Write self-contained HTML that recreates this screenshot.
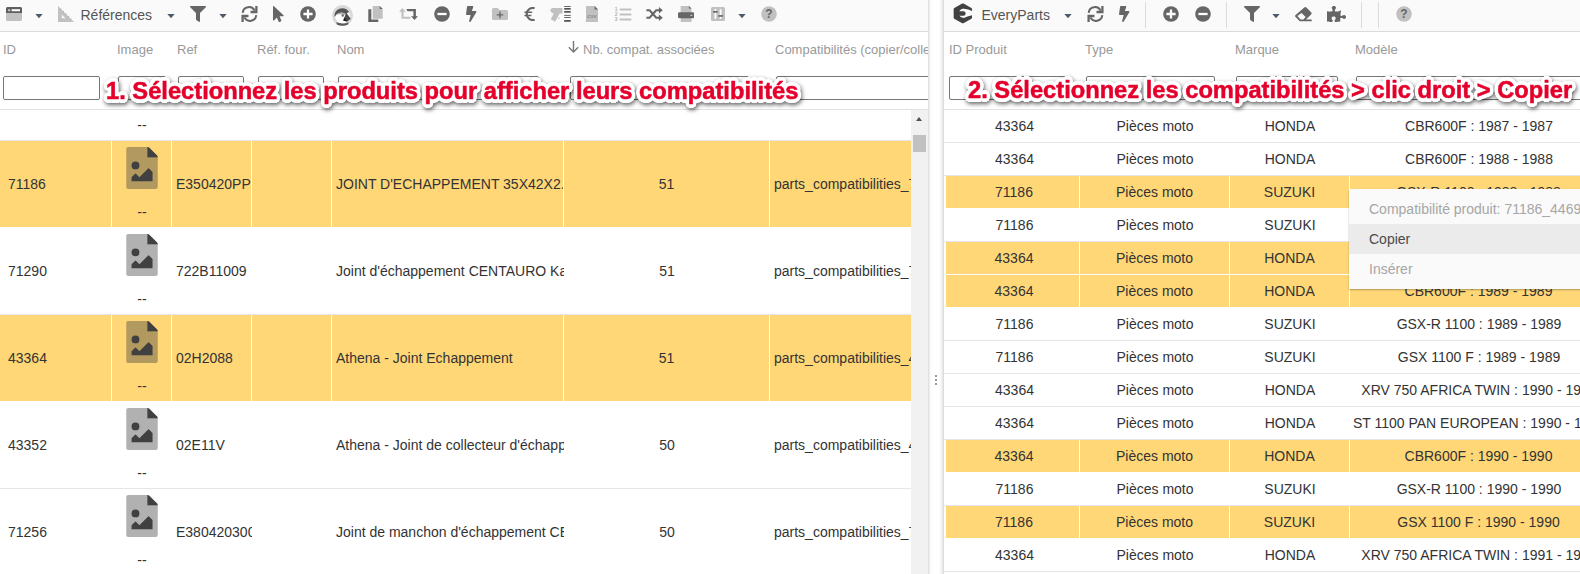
<!DOCTYPE html>
<html lang="fr"><head><meta charset="utf-8"><title>Compatibilités</title>
<style>
*{box-sizing:border-box;margin:0;padding:0}
html,body{width:1580px;height:574px;overflow:hidden;background:#fff;font-family:"Liberation Sans",Arial,sans-serif;font-size:14px;color:#333}
.abs{position:absolute}
#left{position:absolute;left:0;top:0;width:928px;height:574px;overflow:hidden;background:#fff}
#right{position:absolute;left:944px;top:0;width:636px;height:574px;overflow:hidden;background:#fff}
#split{position:absolute;left:928px;top:0;width:16px;height:574px;background:linear-gradient(90deg,#dcdcdc 0,#e6e6e6 1px,#f7f7f7 2px,#fff 4px,#fff 11px,#f6f6f6 13px,#e4e4e4 15px,#d6d6d6 16px)}
.tb{position:absolute;left:0;top:0;right:0;height:32px;background:#fafafa;border-bottom:1px solid #dcdcdc}
.tb svg{position:absolute}
.tbt{position:absolute;top:6px;font-size:14px;color:#555;line-height:18px;white-space:nowrap}
.sep{position:absolute;top:2px;width:1px;height:26px;background:#dcdcdc}
.hd{position:absolute;top:42px;font-size:13px;color:#999;line-height:16px;white-space:nowrap}
.fi{position:absolute;top:76px;height:24px;border:1px solid #767676;border-radius:2px;background:#fff}
.hline{position:absolute;left:0;right:0;top:109px;height:1px;background:#e2e2e2}
.lrow{position:absolute;left:0;width:911px;height:87px;border-bottom:1px solid #e6e6e8}
.lrow.sel{background:#ffd777;border-bottom-color:#fff}
.lrow .c{position:absolute;top:0;height:86px;line-height:86px;white-space:nowrap;overflow:hidden;padding-left:8px}
.lrow.sel .c{border-right:1px solid #fffdf6}
.lrow .c.ctr{text-align:center;padding-left:0}
.fimg{position:absolute;left:14px;top:6px}
.dd{position:absolute;left:0;width:60px;top:63px;line-height:16px;text-align:center;font-size:14px}
.rrow{position:absolute;left:0;width:700px;height:33px;border-bottom:1px solid #e6e6e8}
.rrow .c{position:absolute;top:0;height:32px;line-height:32px;text-align:center;white-space:nowrap;overflow:hidden}
.rrow.sel{border-bottom-color:#fff}
.rrow.sel .c{background:#ffd777;border-right:1px solid #fffdf6}
.menu{position:absolute;left:405px;top:189px;width:300px;height:100px;background:#fafafa;box-shadow:0 1px 1.5px rgba(0,0,0,.3);padding-top:5px}
.menu div{height:30px;line-height:30px;padding-left:20px;font-size:14px;white-space:nowrap;color:#4a4a4a}
.menu .dis{color:#a6a6a6}
.menu .hov{background:#ebebeb}
.note{position:absolute;font-weight:bold;font-size:23.7px;line-height:28px;color:#e4002b;white-space:nowrap;z-index:20;-webkit-text-stroke:.5px #e4002b;
 text-shadow:3.70px 0.00px 0.6px #fff,3.57px 0.96px 0.6px #fff,3.20px 1.85px 0.6px #fff,2.62px 2.62px 0.6px #fff,1.85px 3.20px 0.6px #fff,0.96px 3.57px 0.6px #fff,0.00px 3.70px 0.6px #fff,-0.96px 3.57px 0.6px #fff,-1.85px 3.20px 0.6px #fff,-2.62px 2.62px 0.6px #fff,-3.20px 1.85px 0.6px #fff,-3.57px 0.96px 0.6px #fff,-3.70px 0.00px 0.6px #fff,-3.57px -0.96px 0.6px #fff,-3.20px -1.85px 0.6px #fff,-2.62px -2.62px 0.6px #fff,-1.85px -3.20px 0.6px #fff,-0.96px -3.57px 0.6px #fff,-0.00px -3.70px 0.6px #fff,0.96px -3.57px 0.6px #fff,1.85px -3.20px 0.6px #fff,2.62px -2.62px 0.6px #fff,3.20px -1.85px 0.6px #fff,3.57px -0.96px 0.6px #fff,2.60px 0.00px 0.6px #fff,2.34px 1.13px 0.6px #fff,1.62px 2.03px 0.6px #fff,0.58px 2.53px 0.6px #fff,-0.58px 2.53px 0.6px #fff,-1.62px 2.03px 0.6px #fff,-2.34px 1.13px 0.6px #fff,-2.60px 0.00px 0.6px #fff,-2.34px -1.13px 0.6px #fff,-1.62px -2.03px 0.6px #fff,-0.58px -2.53px 0.6px #fff,0.58px -2.53px 0.6px #fff,1.62px -2.03px 0.6px #fff,2.34px -1.13px 0.6px #fff,1.40px 0.00px 0.6px #fff,0.99px 0.99px 0.6px #fff,0.00px 1.40px 0.6px #fff,-0.99px 0.99px 0.6px #fff,-1.40px 0.00px 0.6px #fff,-0.99px -0.99px 0.6px #fff,-0.00px -1.40px 0.6px #fff,0.99px -0.99px 0.6px #fff;filter:drop-shadow(1.5px 2.5px 2px rgba(0,0,0,.6))}
.sb{position:absolute;left:911px;top:110px;width:17px;height:464px;background:#f1f1f1}
.sb i{position:absolute;left:2px;top:25px;width:13px;height:17px;background:#c1c1c1}
.sb b{position:absolute;left:5px;top:7px;width:0;height:0;border-left:3.500px solid transparent;border-right:3.500px solid transparent;border-bottom:4.500px solid #505050}
</style></head><body>

<div id="left">
<div class="tb" id="ltb"><svg style="left:6px;top:7px" width="16" height="14" viewBox="0 0 16 14"><rect width="16" height="14" rx="1.600" fill="#c1c1c1"/><path d="M0 1.600A1.600 1.600 0 0 1 1.600 0h12.800A1.600 1.600 0 0 1 16 1.600V6H0z" fill="#5f5f5f"/><rect x="2" y="2.200" width="2.200" height="2" fill="#c1c1c1"/><rect x="5.600" y="2.200" width="8.400" height="2" fill="#fff"/></svg>
<svg style="left:35px;top:14px" width="8" height="5" viewBox="0 0 8 5"><path d="M.3 0h7.400L4 4.300z" fill="#4c5a69"/></svg>
<svg style="left:58px;top:6px" width="16" height="16" viewBox="0 0 16 16"><path fill-rule="evenodd" d="M0 0L16 16H0zM3.800 8.600v3.700h3.700z" fill="#c1c1c1"/><path d="M3.300 2.700l-1.100 1.100M5.800 5.200l-1.100 1.100M8.300 7.700l-1.100 1.100M10.800 10.200l-1.100 1.100M13.300 12.700l-1.100 1.100" stroke="#9c9c9c" stroke-width=".9"/></svg>
<span class="tbt" style="left:80.500px">Références</span>
<svg style="left:167px;top:14px" width="8" height="5" viewBox="0 0 8 5"><path d="M.3 0h7.400L4 4.300z" fill="#4c5a69"/></svg>
<svg style="left:189.500px;top:6px" width="16" height="16" viewBox="0 0 512 512"><path fill="#666" d="M487.976 0H24.028C2.710 0-8.047 25.866 7.058 40.971L192 225.941V432c0 7.831 3.821 15.170 10.237 19.662l80 55.980C298.020 518.690 320 507.493 320 487.980V225.941l184.947-184.970C520.021 25.896 509.338 0 487.976 0z"/></svg>
<svg style="left:219px;top:14px" width="8" height="5" viewBox="0 0 8 5"><path d="M.3 0h7.400L4 4.300z" fill="#4c5a69"/></svg>
<svg style="left:241px;top:6px" width="17" height="16" viewBox="0 0 17 16"><g fill="none" stroke="#666"><path stroke-width="2" d="M1.700 6.800A6.300 6.300 0 0 1 13.600 4.600"/><path stroke-width="2.300" d="M15.400 .1V6H9.500"/><path stroke-width="2" d="M15.300 9.200A6.300 6.300 0 0 1 3.400 11.400"/><path stroke-width="2.300" d="M1.600 15.900V10H7.500"/></g></svg>
<svg style="left:273px;top:6px" width="10.700" height="16" viewBox="0 0 320 512" preserveAspectRatio="none"><path fill="#666" d="M302.189 329.126H196.105l55.831 135.993c3.889 9.428-.555 19.999-9.444 23.999l-49.165 21.427c-9.165 4-19.443-.571-23.332-9.714l-53.053-129.136-86.664 89.138C18.729 472.710 0 463.554 0 447.977V18.299C0 1.899 19.921-6.096 30.277 5.443l284.412 292.542c11.472 11.179 3.007 31.141-12.500 31.141z"/></svg>
<svg style="left:299.500px;top:6px" width="16" height="16" viewBox="0 0 16 16"><circle cx="8" cy="8" r="7.800" fill="#666"/><path d="M3.400 8h9.200M8 3.400v9.200" stroke="#fff" stroke-width="2.300"/></svg>
<svg style="left:332px;top:4.500px" width="21" height="21" viewBox="0 0 21 21"><circle cx="10.500" cy="10.500" r="10.500" fill="#d9d9d9"/><circle cx="10.600" cy="11.300" r="7.500" fill="#fff"/><path d="M2.600 12C1.900 7 5.600 3.300 10.200 3.300c3.100 0 5.600 1.500 6.900 3.700L13.300 9C10 6.600 4.800 7.600 2.600 12z" fill="#555"/><path d="M3.600 10C6 7.300 10.600 6.600 13.300 9l-1.300 1.600C9.600 8.800 6 8.800 3.600 10z" fill="#adadad"/><path d="M14.200 7.500l4.500 6.300-3.300 2.600-4.100-.7z" fill="#4a4a4a"/><path d="M12.200 12.200l3.200 4.200-4.100-.7z" fill="#1f1f1f"/><circle cx="10.700" cy="10.700" r="1.100" fill="#555"/><path d="M4.400 17.300c3.500 1.500 8.500 1.500 12.100-.1l-.3 2.200c-3.500 1.700-8 1.700-11.400 0z" fill="#5a5a5a"/></svg>
<svg style="left:368px;top:6px" width="15" height="16" viewBox="0 0 15 16"><path d="M.3 3.200h3v10.300h7v2.500H.3z" fill="#666"/><path d="M4.700 0h7l3 3v9.800h-10z" fill="#c1c1c1"/><path d="M11.700 0l3 3h-3z" fill="#666"/></svg>
<svg style="left:399px;top:8px" width="19" height="12" viewBox="0 0 19 12"><path d="M0 3.800L3.400 0l3.400 3.800H4.600v4.900h6.900v2.100H2.400V3.800z" fill="#c1c1c1"/><path d="M7.200 1.100h9.700v7.100H19L15.500 12 12 8.200h2.400V3.200H8.600z" fill="#666"/></svg>
<svg style="left:434.200px;top:6px" width="16" height="16" viewBox="0 0 16 16"><circle cx="8" cy="8" r="7.800" fill="#666"/><path d="M3.400 8h9.200" stroke="#fff" stroke-width="2.300"/></svg>
<svg style="left:466.200px;top:6px" width="10.400" height="16" viewBox="0 0 320 512" preserveAspectRatio="none"><path fill="#666" d="M296 160H180.600l42.600-129.800C227.200 15 215.700 0 200 0H56C44 0 33.800 8.900 32.200 20.800l-32 240C-1.700 275.200 9.500 288 24 288h118.700L96.600 482.500c-3.600 15.200 8 29.500 23.300 29.500 8.400 0 16.400-4.400 20.800-12l176-304c9.300-15.900-2.200-36-20.700-36z"/></svg>
<svg style="left:492.200px;top:8px" width="16" height="12" viewBox="0 0 16 12"><path d="M1.500 0H5.600L7.600 2H14.500A1.500 1.500 0 0 1 16 3.500V10.500A1.500 1.500 0 0 1 14.500 12H1.500A1.500 1.500 0 0 1 0 10.500V1.500A1.500 1.500 0 0 1 1.500 0z" fill="#c1c1c1"/><path d="M4.700 6.900h6.600M8 3.600v6.600" stroke="#666" stroke-width="1.300"/></svg>
<svg style="left:523.500px;top:7px" width="12" height="14" viewBox="0 0 12 14"><path d="M10.600 1.300A6 6 0 0 0 2.700 7a6 6 0 0 0 7.900 5.700" fill="none" stroke="#666" stroke-width="2.100"/><path d="M.6 4.600h7.800L8 6.100H.3zM.6 7.800h7L7.200 9.300H.3z" fill="#666"/></svg>
<svg style="left:550px;top:6px" width="21" height="16" viewBox="0 0 21 16"><path d="M2.700 2h9.800v5.600H9.600L5.200 15.700 .7 13.200 3.800 7.400C1.700 7.200.4 6 .4 4.600.4 3 1.400 2 2.700 2z" fill="#c1c1c1"/><path d="M9.300 10.400l-1.400 2.700h1.400z" fill="#c1c1c1"/><g fill="#555"><rect x="14.200" y="0" width="6.500" height=".9"/><rect x="14.200" y="2" width="6.500" height="1.700"/><rect x="14.200" y="5" width="6.500" height="1.700"/><rect x="14.200" y="8.900" width="6.500" height=".9"/><rect x="14.200" y="11" width="6.500" height=".9"/><rect x="14.200" y="14" width="6.500" height="1.800"/></g></svg>
<svg style="left:586.200px;top:6px" width="12" height="16" viewBox="0 0 12 16"><path d="M0 0h8.600L12 3.600V16H0z" fill="#c1c1c1"/><path d="M8.600 0L12 3.600H8.600z" fill="#666"/><text x="6" y="12.300" font-family="Liberation Sans,sans-serif" font-size="5.600" font-weight="bold" text-anchor="middle" fill="#8a8a8a">csv</text></svg>
<svg style="left:613.500px;top:6.500px" width="18" height="15" viewBox="0 0 18 15"><g fill="#c1c1c1"><rect x="5.500" y="1.600" width="12" height="1.900" rx=".9"/><rect x="5.500" y="6.600" width="12" height="1.900" rx=".9"/><rect x="5.500" y="11.600" width="12" height="1.900" rx=".9"/></g><g font-family="Liberation Sans,sans-serif" font-size="5" font-weight="bold" fill="#b0b0b0"><text x=".8" y="4.300">1</text><text x=".8" y="9.300">2</text><text x=".8" y="14.300">3</text></g></svg>
<svg style="left:646px;top:7px" width="17" height="14" viewBox="0 0 17 14"><g fill="none" stroke="#666" stroke-width="2"><path d="M.4 3.300h3.200l6.600 7.400h3.600"/><path d="M.4 10.700h3.200l6.600-7.400h3.600"/></g><path d="M12.900 0l3.900 3.300-3.900 3.300zM12.900 7.400l3.900 3.300-3.900 3.300z" fill="#666"/></svg>
<svg style="left:678.300px;top:6px" width="16.200" height="16" viewBox="0 0 16.200 16"><path d="M2.700 0h8.200l2.600 2.600V7H2.700zM2.700 11h10.800v5H2.700z" fill="#c1c1c1"/><path d="M10.900 0l2.600 2.600h-2.600z" fill="#666"/><rect x="0" y="6.300" width="16.200" height="5.900" rx="1.400" fill="#666"/><rect x="12.300" y="8.700" width="2.200" height="1.100" rx=".5" fill="#ddd"/></svg>
<svg style="left:710.500px;top:7px" width="14" height="14" viewBox="0 0 14 14"><rect width="14" height="14" rx="1.500" fill="#c1c1c1"/><rect x="3.500" y="2.200" width="1.800" height="9.600" fill="#fff"/><rect x="8.700" y="2.200" width="1.800" height="9.600" fill="#fff"/><rect x="2.200" y="4" width="4.400" height="1.700" fill="#666"/><rect x="7.400" y="8.100" width="4.400" height="1.700" fill="#666"/></svg>
<svg style="left:738.3px;top:14px" width="8" height="5" viewBox="0 0 8 5"><path d="M.3 0h7.400L4 4.300z" fill="#4c5a69"/></svg>
<svg style="left:760.700px;top:6px" width="16" height="16" viewBox="0 0 16 16"><circle cx="8" cy="8" r="7.800" fill="#c1c1c1"/><text x="8" y="12.300" font-family="Liberation Sans,sans-serif" font-size="12" font-weight="bold" text-anchor="middle" fill="#666">?</text></svg>
</div>
<div class="hd" style="left:3px">ID</div>
<div class="hd" style="left:117px">Image</div>
<div class="hd" style="left:177px">Ref</div>
<div class="hd" style="left:257px">Réf. four.</div>
<div class="hd" style="left:337px">Nom</div>
<div class="hd" style="left:583px">Nb. compat. associées</div>
<div class="hd" style="left:775px">Compatibilités (copier/coller)</div>
<svg class="abs" style="left:567px;top:40px" width="13" height="14" viewBox="0 0 13 14"><path d="M6.500 1v11M1.800 7.300l4.700 4.700 4.700-4.700" fill="none" stroke="#777" stroke-width="1.400"/></svg>
<div class="fi" style="left:3px;width:97px"></div>
<div class="fi" style="left:118px;width:48px"></div>
<div class="fi" style="left:178px;width:66px"></div>
<div class="fi" style="left:258px;width:66px"></div>
<div class="fi" style="left:338px;width:201px"></div>
<div class="fi" style="left:570px;width:179px"></div>
<div class="fi" style="left:776px;width:160px"></div>
<div class="hline"></div>
<div class="lrow" style="top:54px">
<div class="c" style="left:0px;width:112px"></div>
<div class="c" style="left:112px;width:60px;padding:0"><span class="dd">--</span></div>
<div class="c" style="left:172px;width:80px;padding-left:4px"></div>
<div class="c" style="left:252px;width:80px;padding-left:4px"></div>
<div class="c" style="left:332px;width:232px;padding-left:4px"></div>
<div class="c ctr" style="left:564px;width:206px"></div>
<div class="c" style="left:770px;width:142px;padding-left:4px"></div>
</div>
<div class="lrow sel" style="top:141px">
<div class="c" style="left:0px;width:112px">71186</div>
<div class="c" style="left:112px;width:60px;padding:0"><svg class="fimg" viewBox="0 0 384 512" width="32" height="42"><path fill="#3c3c3c" fill-opacity=".4" d="M24 0H256V128H384V488a24 24 0 0 1-24 24H24a24 24 0 0 1-24-24V24A24 24 0 0 1 24 0z"/><path fill="#404040" d="M256 0h6a24 24 0 0 1 17 7l98 98a24 24 0 0 1 7 17v6H256z"/><circle cx="112.500" cy="224" r="48" fill="#404040"/><path fill="#404040" d="M64.500 416L65 367.500 104.500 328q8-8 16.500.5L160.500 368 264 264.500q8.500-8 17 0L320.500 304V416z"/></svg><span class="dd">--</span></div>
<div class="c" style="left:172px;width:80px;padding-left:4px">E350420PP</div>
<div class="c" style="left:252px;width:80px;padding-left:4px"></div>
<div class="c" style="left:332px;width:232px;padding-left:4px">JOINT D'ECHAPPEMENT 35X42X2.5</div>
<div class="c ctr" style="left:564px;width:206px">51</div>
<div class="c" style="left:770px;width:142px;padding-left:4px">parts_compatibilities_71186</div>
</div>
<div class="lrow" style="top:228px">
<div class="c" style="left:0px;width:112px">71290</div>
<div class="c" style="left:112px;width:60px;padding:0"><svg class="fimg" viewBox="0 0 384 512" width="32" height="42"><path fill="#3c3c3c" fill-opacity=".4" d="M24 0H256V128H384V488a24 24 0 0 1-24 24H24a24 24 0 0 1-24-24V24A24 24 0 0 1 24 0z"/><path fill="#404040" d="M256 0h6a24 24 0 0 1 17 7l98 98a24 24 0 0 1 7 17v6H256z"/><circle cx="112.500" cy="224" r="48" fill="#404040"/><path fill="#404040" d="M64.500 416L65 367.500 104.500 328q8-8 16.500.5L160.500 368 264 264.500q8.500-8 17 0L320.500 304V416z"/></svg><span class="dd">--</span></div>
<div class="c" style="left:172px;width:80px;padding-left:4px">722B11009</div>
<div class="c" style="left:252px;width:80px;padding-left:4px"></div>
<div class="c" style="left:332px;width:232px;padding-left:4px">Joint d'échappement CENTAURO Kawasaki</div>
<div class="c ctr" style="left:564px;width:206px">51</div>
<div class="c" style="left:770px;width:142px;padding-left:4px">parts_compatibilities_71290</div>
</div>
<div class="lrow sel" style="top:315px">
<div class="c" style="left:0px;width:112px">43364</div>
<div class="c" style="left:112px;width:60px;padding:0"><svg class="fimg" viewBox="0 0 384 512" width="32" height="42"><path fill="#3c3c3c" fill-opacity=".4" d="M24 0H256V128H384V488a24 24 0 0 1-24 24H24a24 24 0 0 1-24-24V24A24 24 0 0 1 24 0z"/><path fill="#404040" d="M256 0h6a24 24 0 0 1 17 7l98 98a24 24 0 0 1 7 17v6H256z"/><circle cx="112.500" cy="224" r="48" fill="#404040"/><path fill="#404040" d="M64.500 416L65 367.500 104.500 328q8-8 16.500.5L160.500 368 264 264.500q8.500-8 17 0L320.500 304V416z"/></svg><span class="dd">--</span></div>
<div class="c" style="left:172px;width:80px;padding-left:4px">02H2088</div>
<div class="c" style="left:252px;width:80px;padding-left:4px"></div>
<div class="c" style="left:332px;width:232px;padding-left:4px">Athena - Joint Echappement</div>
<div class="c ctr" style="left:564px;width:206px">51</div>
<div class="c" style="left:770px;width:142px;padding-left:4px">parts_compatibilities_43364</div>
</div>
<div class="lrow" style="top:402px">
<div class="c" style="left:0px;width:112px">43352</div>
<div class="c" style="left:112px;width:60px;padding:0"><svg class="fimg" viewBox="0 0 384 512" width="32" height="42"><path fill="#3c3c3c" fill-opacity=".4" d="M24 0H256V128H384V488a24 24 0 0 1-24 24H24a24 24 0 0 1-24-24V24A24 24 0 0 1 24 0z"/><path fill="#404040" d="M256 0h6a24 24 0 0 1 17 7l98 98a24 24 0 0 1 7 17v6H256z"/><circle cx="112.500" cy="224" r="48" fill="#404040"/><path fill="#404040" d="M64.500 416L65 367.500 104.500 328q8-8 16.500.5L160.500 368 264 264.500q8.500-8 17 0L320.500 304V416z"/></svg><span class="dd">--</span></div>
<div class="c" style="left:172px;width:80px;padding-left:4px">02E11V</div>
<div class="c" style="left:252px;width:80px;padding-left:4px"></div>
<div class="c" style="left:332px;width:232px;padding-left:4px">Athena - Joint de collecteur d'échappement</div>
<div class="c ctr" style="left:564px;width:206px">50</div>
<div class="c" style="left:770px;width:142px;padding-left:4px">parts_compatibilities_43352</div>
</div>
<div class="lrow" style="top:489px">
<div class="c" style="left:0px;width:112px">71256</div>
<div class="c" style="left:112px;width:60px;padding:0"><svg class="fimg" viewBox="0 0 384 512" width="32" height="42"><path fill="#3c3c3c" fill-opacity=".4" d="M24 0H256V128H384V488a24 24 0 0 1-24 24H24a24 24 0 0 1-24-24V24A24 24 0 0 1 24 0z"/><path fill="#404040" d="M256 0h6a24 24 0 0 1 17 7l98 98a24 24 0 0 1 7 17v6H256z"/><circle cx="112.500" cy="224" r="48" fill="#404040"/><path fill="#404040" d="M64.500 416L65 367.500 104.500 328q8-8 16.500.5L160.500 368 264 264.500q8.500-8 17 0L320.500 304V416z"/></svg><span class="dd">--</span></div>
<div class="c" style="left:172px;width:80px;padding-left:4px">E380420300</div>
<div class="c" style="left:252px;width:80px;padding-left:4px"></div>
<div class="c" style="left:332px;width:232px;padding-left:4px">Joint de manchon d'échappement CENTAURO</div>
<div class="c ctr" style="left:564px;width:206px">50</div>
<div class="c" style="left:770px;width:142px;padding-left:4px">parts_compatibilities_71256</div>
</div>
<div class="sb"><b></b><i></i></div>
<div class="note" style="left:106px;top:77px" id="n1">1. Sélectionnez les produits pour afficher leurs compatibilités</div>
</div>
<div id="split"><svg class="abs" style="left:6px;top:374px" width="4" height="12"><rect x="1" y="1" width="2" height="2" fill="#9a9a9a"/><rect x="1" y="5" width="2" height="2" fill="#9a9a9a"/><rect x="1" y="9" width="2" height="2" fill="#9a9a9a"/></svg></div>
<div id="right">
<div class="tb" id="rtb"><svg style="left:9px;top:2.500px" width="20" height="21" viewBox="0 0 20 21"><path d="M9.850 1.700L17.800 6.200V14.600L9.850 19.100 1.900 14.600V6.200z" fill="#414141" stroke="#414141" stroke-width="2.500" stroke-linejoin="round"/><circle cx="10.400" cy="10.200" r="4.500" fill="#fafafa"/><path d="M10.400 5.700L15.400 6.500 20 8.400V11.900L15.400 13.300 10.400 14.700z" fill="#fafafa"/><rect x="4" y="8.300" width="8.600" height="4.500" rx="2.200" fill="#414141"/></svg>
<span class="tbt" style="left:37.500px">EveryParts</span>
<svg style="left:120.2px;top:14px" width="8" height="5" viewBox="0 0 8 5"><path d="M.3 0h7.400L4 4.300z" fill="#4c5a69"/></svg>
<svg style="left:143px;top:6px" width="17" height="16" viewBox="0 0 17 16"><g fill="none" stroke="#666"><path stroke-width="2" d="M1.700 6.800A6.300 6.300 0 0 1 13.600 4.600"/><path stroke-width="2.300" d="M15.400 .1V6H9.500"/><path stroke-width="2" d="M15.300 9.200A6.300 6.300 0 0 1 3.400 11.400"/><path stroke-width="2.300" d="M1.600 15.900V10H7.500"/></g></svg>
<svg style="left:175.200px;top:6px" width="10.400" height="16" viewBox="0 0 320 512" preserveAspectRatio="none"><path fill="#666" d="M296 160H180.600l42.600-129.800C227.200 15 215.700 0 200 0H56C44 0 33.800 8.900 32.200 20.800l-32 240C-1.700 275.200 9.500 288 24 288h118.700L96.600 482.500c-3.600 15.200 8 29.500 23.300 29.500 8.400 0 16.400-4.400 20.800-12l176-304c9.300-15.900-2.200-36-20.700-36z"/></svg>
<i class="sep" style="left:201px"></i>
<svg style="left:218.500px;top:6px" width="16" height="16" viewBox="0 0 16 16"><circle cx="8" cy="8" r="7.800" fill="#666"/><path d="M3.400 8h9.200M8 3.400v9.200" stroke="#fff" stroke-width="2.300"/></svg>
<svg style="left:250.500px;top:6px" width="16" height="16" viewBox="0 0 16 16"><circle cx="8" cy="8" r="7.800" fill="#666"/><path d="M3.400 8h9.200" stroke="#fff" stroke-width="2.300"/></svg>
<i class="sep" style="left:282px"></i>
<svg style="left:299.500px;top:6px" width="16" height="16" viewBox="0 0 512 512"><path fill="#666" d="M487.976 0H24.028C2.710 0-8.047 25.866 7.058 40.971L192 225.941V432c0 7.831 3.821 15.170 10.237 19.662l80 55.980C298.020 518.690 320 507.493 320 487.980V225.941l184.947-184.970C520.021 25.896 509.338 0 487.976 0z"/></svg>
<svg style="left:328.2px;top:14px" width="8" height="5" viewBox="0 0 8 5"><path d="M.3 0h7.400L4 4.300z" fill="#4c5a69"/></svg>
<svg style="left:351px;top:6.500px" width="17" height="15" viewBox="0 0 17 15"><path d="M9.300 .6a1.500 1.500 0 0 1 2.100 0l4.700 4.700a1.500 1.500 0 0 1 0 2.100L11 12.400h5.700v1.900H4.800L.6 10.100a1.500 1.500 0 0 1 0-2.100z" fill="#666"/><path d="M5.600 12.400h2.800l2.300-2.300-4.200-4.200L2.400 9.100z" fill="#fafafa"/></svg>
<svg style="left:383px;top:6px" width="19" height="16" viewBox="0 0 576 512" preserveAspectRatio="none"><path fill="#666" d="M519.442 288.651c-41.519 0-59.500 31.593-82.058 31.593C377.409 320.244 432 144 432 144s-196.288 80-196.288-3.297c0-35.827 36.288-46.250 36.288-85.985C272 19.216 243.885 0 210.539 0c-34.654 0-66.366 18.891-66.366 56.346 0 41.364 31.711 59.277 31.711 81.750C175.885 207.719 0 166.758 0 166.758v333.237s178.635 41.047 178.635-28.662c0-22.473-40-40.107-40-81.471 0-37.456 29.250-56.346 63.577-56.346 33.673 0 61.788 19.216 61.788 54.717 0 39.735-36.288 50.158-36.288 85.985 0 60.803 129.675 25.730 181.230 25.730 0 0-34.725-120.101 25.827-120.101 35.962 0 46.423 36.152 86.308 36.152C556.712 416 576 387.990 576 354.443c0-34.199-18.962-65.792-56.558-65.792z"/></svg>
<i class="sep" style="left:417px"></i>
<i class="sep" style="left:434px"></i>
<svg style="left:451.700px;top:6px" width="16" height="16" viewBox="0 0 16 16"><circle cx="8" cy="8" r="7.800" fill="#c1c1c1"/><text x="8" y="12.300" font-family="Liberation Sans,sans-serif" font-size="12" font-weight="bold" text-anchor="middle" fill="#666">?</text></svg>
</div>
<div class="hd" style="left:5px">ID Produit</div>
<div class="hd" style="left:141px">Type</div>
<div class="hd" style="left:291px">Marque</div>
<div class="hd" style="left:411px">Modèle</div>
<div class="fi" style="left:5px;width:117px"></div>
<div class="fi" style="left:141.5px;width:129px"></div>
<div class="fi" style="left:291.5px;width:102px"></div>
<div class="fi" style="left:412px;width:300px"></div>
<div class="hline"></div>
<div class="rrow" style="top:110px">
<div class="c" style="left:2px;width:134px;padding-left:3px">43364</div>
<div class="c" style="left:136px;width:150px">Pièces moto</div>
<div class="c" style="left:286px;width:120px">HONDA</div>
<div class="c" style="left:406px;width:258px">CBR600F : 1987 - 1987</div>
</div>
<div class="rrow" style="top:143px">
<div class="c" style="left:2px;width:134px;padding-left:3px">43364</div>
<div class="c" style="left:136px;width:150px">Pièces moto</div>
<div class="c" style="left:286px;width:120px">HONDA</div>
<div class="c" style="left:406px;width:258px">CBR600F : 1988 - 1988</div>
</div>
<div class="rrow sel" style="top:176px">
<div class="c" style="left:2px;width:134px;padding-left:3px">71186</div>
<div class="c" style="left:136px;width:150px">Pièces moto</div>
<div class="c" style="left:286px;width:120px">SUZUKI</div>
<div class="c" style="left:406px;width:258px">GSX-R 1100 : 1988 - 1988</div>
</div>
<div class="rrow" style="top:209px">
<div class="c" style="left:2px;width:134px;padding-left:3px">71186</div>
<div class="c" style="left:136px;width:150px">Pièces moto</div>
<div class="c" style="left:286px;width:120px">SUZUKI</div>
<div class="c" style="left:406px;width:258px">GSX 1100 F : 1988 - 1988</div>
</div>
<div class="rrow sel" style="top:242px">
<div class="c" style="left:2px;width:134px;padding-left:3px">43364</div>
<div class="c" style="left:136px;width:150px">Pièces moto</div>
<div class="c" style="left:286px;width:120px">HONDA</div>
<div class="c" style="left:406px;width:258px">XRV 750 AFRICA TWIN : 1989 - 1989</div>
</div>
<div class="rrow sel" style="top:275px">
<div class="c" style="left:2px;width:134px;padding-left:3px">43364</div>
<div class="c" style="left:136px;width:150px">Pièces moto</div>
<div class="c" style="left:286px;width:120px">HONDA</div>
<div class="c" style="left:406px;width:258px">CBR600F : 1989 - 1989</div>
</div>
<div class="rrow" style="top:308px">
<div class="c" style="left:2px;width:134px;padding-left:3px">71186</div>
<div class="c" style="left:136px;width:150px">Pièces moto</div>
<div class="c" style="left:286px;width:120px">SUZUKI</div>
<div class="c" style="left:406px;width:258px">GSX-R 1100 : 1989 - 1989</div>
</div>
<div class="rrow" style="top:341px">
<div class="c" style="left:2px;width:134px;padding-left:3px">71186</div>
<div class="c" style="left:136px;width:150px">Pièces moto</div>
<div class="c" style="left:286px;width:120px">SUZUKI</div>
<div class="c" style="left:406px;width:258px">GSX 1100 F : 1989 - 1989</div>
</div>
<div class="rrow" style="top:374px">
<div class="c" style="left:2px;width:134px;padding-left:3px">43364</div>
<div class="c" style="left:136px;width:150px">Pièces moto</div>
<div class="c" style="left:286px;width:120px">HONDA</div>
<div class="c" style="left:406px;width:258px">XRV 750 AFRICA TWIN : 1990 - 1990</div>
</div>
<div class="rrow" style="top:407px">
<div class="c" style="left:2px;width:134px;padding-left:3px">43364</div>
<div class="c" style="left:136px;width:150px">Pièces moto</div>
<div class="c" style="left:286px;width:120px">HONDA</div>
<div class="c" style="left:406px;width:258px">ST 1100 PAN EUROPEAN : 1990 - 1990</div>
</div>
<div class="rrow sel" style="top:440px">
<div class="c" style="left:2px;width:134px;padding-left:3px">43364</div>
<div class="c" style="left:136px;width:150px">Pièces moto</div>
<div class="c" style="left:286px;width:120px">HONDA</div>
<div class="c" style="left:406px;width:258px">CBR600F : 1990 - 1990</div>
</div>
<div class="rrow" style="top:473px">
<div class="c" style="left:2px;width:134px;padding-left:3px">71186</div>
<div class="c" style="left:136px;width:150px">Pièces moto</div>
<div class="c" style="left:286px;width:120px">SUZUKI</div>
<div class="c" style="left:406px;width:258px">GSX-R 1100 : 1990 - 1990</div>
</div>
<div class="rrow sel" style="top:506px">
<div class="c" style="left:2px;width:134px;padding-left:3px">71186</div>
<div class="c" style="left:136px;width:150px">Pièces moto</div>
<div class="c" style="left:286px;width:120px">SUZUKI</div>
<div class="c" style="left:406px;width:258px">GSX 1100 F : 1990 - 1990</div>
</div>
<div class="rrow" style="top:539px">
<div class="c" style="left:2px;width:134px;padding-left:3px">43364</div>
<div class="c" style="left:136px;width:150px">Pièces moto</div>
<div class="c" style="left:286px;width:120px">HONDA</div>
<div class="c" style="left:406px;width:258px">XRV 750 AFRICA TWIN : 1991 - 1991</div>
</div>
<div class="rrow" style="top:572px">
<div class="c" style="left:2px;width:134px;padding-left:3px">43364</div>
<div class="c" style="left:136px;width:150px">Pièces moto</div>
<div class="c" style="left:286px;width:120px">HONDA</div>
<div class="c" style="left:406px;width:258px">ST 1100 PAN EUROPEAN : 1991 - 1991</div>
</div>
<div class="menu"><div class="dis">Compatibilité produit: 71186_44695</div><div class="hov">Copier</div><div class="dis">Insérer</div></div>
<div class="note" style="left:24px;top:76px" id="n2">2. Sélectionnez les compatibilités &gt; clic droit &gt; Copier</div>
</div>
</body></html>
